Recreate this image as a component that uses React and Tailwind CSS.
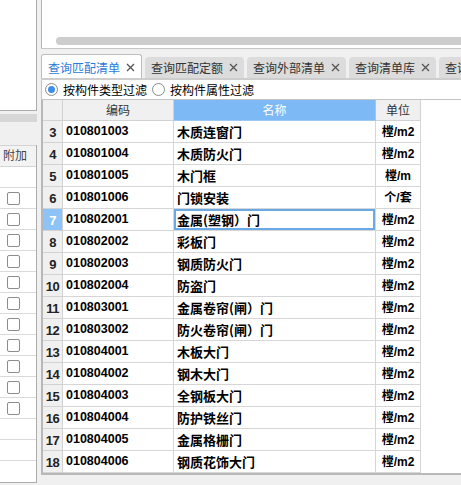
import React from 'react';

const rows = [
  [3, '010801003', '木质连窗门', '樘/m2'],
  [4, '010801004', '木质防火门', '樘/m2'],
  [5, '010801005', '木门框', '樘/m'],
  [6, '010801006', '门锁安装', '个/套'],
  [7, '010802001', '金属(塑钢）门', '樘/m2'],
  [8, '010802002', '彩板门', '樘/m2'],
  [9, '010802003', '钢质防火门', '樘/m2'],
  [10, '010802004', '防盗门', '樘/m2'],
  [11, '010803001', '金属卷帘(闸）门', '樘/m2'],
  [12, '010803002', '防火卷帘(闸）门', '樘/m2'],
  [13, '010804001', '木板大门', '樘/m2'],
  [14, '010804002', '钢木大门', '樘/m2'],
  [15, '010804003', '全钢板大门', '樘/m2'],
  [16, '010804004', '防护铁丝门', '樘/m2'],
  [17, '010804005', '金属格栅门', '樘/m2'],
  [18, '010804006', '钢质花饰大门', '樘/m2'],
];

const leftRows = [false, true, true, true, true, true, true, true, true, true, true, true, false, false, false];

function Cross() {
  return (
    <svg width="9" height="9" viewBox="0 0 9 9" className="shrink-0">
      <path d="M1 1 L8 8 M8 1 L1 8" stroke="#555" strokeWidth="1.3" fill="none" />
    </svg>
  );
}

function Tab({ label, active, cut }) {
  if (active) {
    return (
      <div className="relative z-10 -mb-[2px] h-[26px] flex items-center gap-[6px] pl-[6px] pr-[6px] bg-white border border-b-0 border-[#bdbdbd] rounded-t-[3px] text-[#2b7bd7] shrink-0">
        <span className="leading-none">{label}</span>
        <Cross />
      </div>
    );
  }
  return (
    <div className="h-[21px] flex items-center gap-[6px] pl-[6px] pr-[6px] bg-[#dcdcdc] rounded-t-[4px] text-[#333] shrink-0">
      <span className="leading-none whitespace-nowrap">{label}</span>
      {!cut && <Cross />}
    </div>
  );
}

function Radio({ checked, label }) {
  return (
    <div className="flex items-center gap-[5px]">
      <div className="w-[13px] h-[13px] rounded-full border border-[#8a8a8a] bg-white flex items-center justify-center shrink-0">
        {checked && <div className="w-[7px] h-[7px] rounded-full bg-[#3d8ee8]" />}
      </div>
      <span className="text-[12px] leading-none text-black whitespace-nowrap">{label}</span>
    </div>
  );
}

export default function App() {
  return (
    <div className="w-[461px] h-[485px] bg-[#f0f0f0] flex overflow-hidden font-['Liberation_Sans','Noto_Sans_CJK_SC',sans-serif]">
      {/* Left panel */}
      <div className="w-[37px] shrink-0 flex flex-col">
        <div className="h-[111px] bg-white border-r border-b border-[#acacac]" />
        <div className="h-[3px]" />
        <div className="h-[8px] bg-[#d7d7d7]" />
        <div className="h-[23px]" />
        <div className="bg-white border-r border-b border-[#acacac] flex flex-col">
          <div className="h-[22px] bg-[#f3f3f3] border-t border-b border-[#d4d4d4] flex items-center pl-[3px] text-[12px] text-[#444] whitespace-nowrap">
            附加
          </div>
          {leftRows.map((c, i) => (
            <div key={i} className="h-[21px] border-b border-[#dadada] flex items-center pl-[7px] last:border-b-0">
              {c && <div className="w-[13px] h-[13px] rounded-[2px] border border-[#8c8c8c] bg-white" />}
            </div>
          ))}
        </div>
      </div>

      <div className="w-[4px] shrink-0" />

      {/* Right panel */}
      <div className="flex-1 flex flex-col min-w-0">
        <div className="h-[48px] bg-white border-l border-[#b4b4b4] pt-[37px] overflow-hidden">
          <div className="ml-[14px] w-[440px] h-[8px] rounded-full bg-[#cdcdcd]" />
        </div>
        <div className="h-px bg-[#c6c6c6]" />
        <div className="h-[31px] border-b-2 border-[#cdcdcd] flex items-end gap-[3px] text-[12px] overflow-hidden font-['Noto_Sans_CJK_SC',sans-serif]">
          <Tab label="查询匹配清单" active />
          <Tab label="查询匹配定额" />
          <Tab label="查询外部清单" />
          <Tab label="查询清单库" />
          <Tab label="查询" cut />
        </div>
        <div className="h-[20px] bg-white border-l border-b border-[#c4c4c4] flex items-center pl-[3px] gap-[5px] font-['Noto_Sans_CJK_SC',sans-serif]">
          <Radio checked label="按构件类型过滤" />
          <Radio label="按构件属性过滤" />
        </div>

        {/* Table */}
        <div className="bg-white border-l-2 border-b-2 border-[#b8b8b8] flex flex-col">
          <div className="h-[21px] flex text-[12px] font-['Noto_Sans_CJK_SC',sans-serif]">
            <div className="w-[20px] shrink-0 bg-[#f0f0f0] border-r border-b border-[#d2d2d2]" />
            <div className="w-[111px] shrink-0 bg-[#f0f0f0] border-r border-b border-[#d2d2d2] flex items-center justify-center text-[#333]">编码</div>
            <div className="w-[202px] shrink-0 bg-[#7db9f5] border-r border-b border-[#9cc8f2] flex items-center justify-center text-white">名称</div>
            <div className="w-[45px] shrink-0 bg-[#f0f0f0] border-r border-b border-[#d2d2d2] flex items-center justify-center text-[#333]">单位</div>
            <div className="flex-1" />
          </div>
          {rows.map(([n, code, name, unit]) => {
            const sel = n === 7;
            return (
              <div key={n} className="h-[22px] flex">
                <div className={`w-[20px] shrink-0 border-r border-b border-[#d2d2d2] flex items-center justify-center pt-[3px] text-[13px] font-bold tracking-[-0.5px] ${sel ? 'bg-[#8ec3f7] text-white' : 'bg-[#f0f0f0] text-[#222]'}`}>
                  {n}
                </div>
                <div className="w-[111px] shrink-0 border-r border-b border-[#d6d6d6] flex items-center pl-[3px] text-[12.5px] font-bold text-black">
                  {code}
                </div>
                <div className={`w-[202px] shrink-0 border-r border-b border-[#d6d6d6] flex items-center pl-[3px] text-[13px] font-bold text-black whitespace-nowrap font-['Noto_Sans_CJK_SC',sans-serif] ${sel ? 'ring-2 ring-inset ring-[#6aa8e6]' : ''}`}>
                  {name}
                </div>
                <div className="w-[45px] shrink-0 border-r border-b border-[#d6d6d6] flex items-center justify-center text-[12px] font-bold text-black whitespace-nowrap">
                  {unit}
                </div>
                <div className="flex-1" />
              </div>
            );
          })}
        </div>
        <div className="flex-1" />
      </div>
    </div>
  );
}
